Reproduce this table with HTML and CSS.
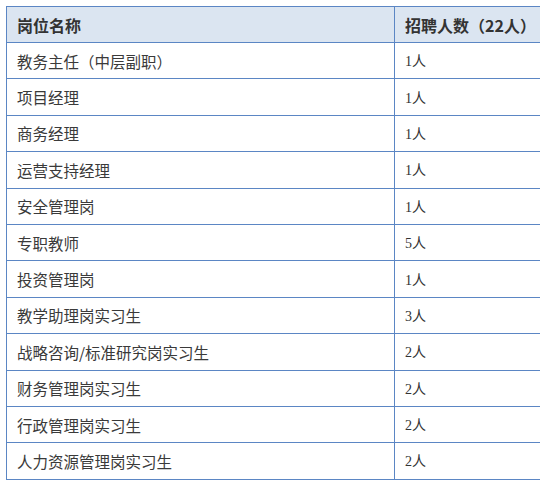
FILE: index.html
```html
<!DOCTYPE html>
<html lang="zh">
<head>
<meta charset="utf-8">
<link rel="stylesheet" href="styles.css">
</head>
<body>
<div class="frame">
<table class="jobs">
  <thead>
    <tr><th class="c-name">岗位名称</th><th class="c-num">招聘人数（22人）</th></tr>
  </thead>
  <tbody>
    <tr><td class="name">教务主任（中层副职）</td><td class="num">1人</td></tr>
    <tr><td class="name">项目经理</td><td class="num">1人</td></tr>
    <tr><td class="name">商务经理</td><td class="num">1人</td></tr>
    <tr><td class="name">运营支持经理</td><td class="num">1人</td></tr>
    <tr><td class="name">安全管理岗</td><td class="num">1人</td></tr>
    <tr><td class="name">专职教师</td><td class="num">5人</td></tr>
    <tr><td class="name">投资管理岗</td><td class="num">1人</td></tr>
    <tr><td class="name">教学助理岗实习生</td><td class="num">3人</td></tr>
    <tr><td class="name">战略咨询/标准研究岗实习生</td><td class="num">2人</td></tr>
    <tr><td class="name">财务管理岗实习生</td><td class="num">2人</td></tr>
    <tr><td class="name">行政管理岗实习生</td><td class="num">2人</td></tr>
    <tr><td class="name">人力资源管理岗实习生</td><td class="num">2人</td></tr>
  </tbody>
</table>
</div>
</body>
</html>
```
FILE: styles.css
```css
html, body {
  margin: 0;
  padding: 0;
  background: #ffffff;
}
body {
  padding: 6px 0 0 6px;
  font-family: "Noto Sans CJK SC", "Noto Sans", sans-serif;
  color: #333333;
}
.frame {
  width: 534px;
  overflow: hidden;
}
.jobs {
  border-collapse: collapse;
  table-layout: fixed;
  width: 580px;
}
.jobs th, .jobs td {
  border: 1px solid #5b86c4;
  padding: 0 0 0 10px;
  text-align: left;
  vertical-align: middle;
  white-space: nowrap;
}
.jobs th {
  background: #dbe5f1;
  height: 35px;
  font-size: 16px;
  font-weight: bold;
  color: #333333;
  line-height: 20px;
}
.c-name { width: 377px; }
.jobs td {
  height: 35.4px;
  line-height: 20px;
}
.name {
  font-size: 15.5px;
  color: #3a3a3a;
}
.jobs td.num {
  font-family: "Liberation Serif", "Noto Sans CJK SC", serif;
  font-size: 14px;
  color: #333333;
  padding-top: 3px;
  box-sizing: border-box;
}
```
